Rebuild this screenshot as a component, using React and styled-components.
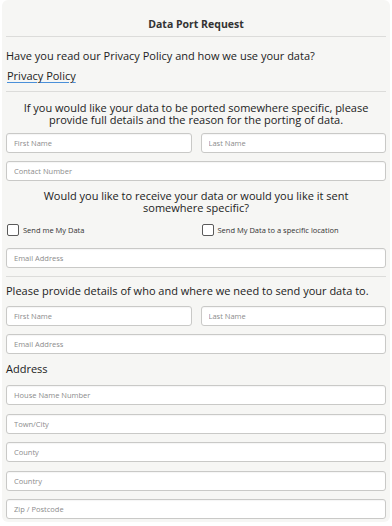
import React from "react";
import styled, { createGlobalStyle } from "styled-components";

const Global = createGlobalStyle`
  html, body { margin: 0; padding: 0; background: #ffffff; }
  body { font-family: "Open Sans", "Noto Sans", sans-serif; color: #222; }
  * { box-sizing: border-box; }
`;

const Card = styled.div`
  margin: 0 2px;
  background: #f6f6f4;
  border-radius: 6px;
  padding: 17px 4px 3px 4px;
  display: flex;
  flex-direction: column;
`;

const Title = styled.h1`
  margin: 0;
  padding: 0 0 5px;
  font-size: 10.5px;
  line-height: 14px;
  font-weight: 700;
  text-align: center;
  color: #333;
  border-bottom: 1px solid #dcdcda;
`;

const Text = styled.p`
  margin: ${(p) => p.$m || "0"};
  padding: 0 ${(p) => p.$inset || "0"};
  font-size: 11px;
  line-height: ${(p) => (p.$center ? "12px" : "14px")};
  text-align: ${(p) => (p.$center ? "center" : "left")};
  color: #222;
`;

const PolicyLink = styled.a`
  display: block;
  align-self: flex-start;
  margin: 6px 0 0 1px;
  font-size: 11px;
  line-height: 14px;
  color: #222;
  text-decoration: underline;
  text-decoration-color: #4a90d9;
  text-decoration-thickness: 1px;
  text-underline-offset: 1.5px;
`;

const Divider = styled.hr`
  margin: ${(p) => p.$m || "0"};
  border: 0;
  border-top: 1px solid #dcdcda;
  height: 0;
`;

const Row = styled.div`
  display: grid;
  grid-template-columns: 1fr 1fr;
  column-gap: 9px;
`;

const Fields = styled.div`
  display: flex;
  flex-direction: column;
  gap: ${(p) => p.$gap || "8px"};
  margin: ${(p) => p.$m || "0"};
`;

const Input = styled.input`
  display: block;
  width: 100%;
  height: 20px;
  margin: 0;
  border: 1px solid #c9c9c7;
  border-radius: 3px;
  background: #ffffff;
  padding: 0 7px;
  font-family: "Open Sans", sans-serif;
  font-size: 7.5px;
  color: #333;
  box-shadow: inset 0 1px 1px rgba(0, 0, 0, 0.04);
  outline: none;
  &::placeholder {
    color: #8c8c8c;
  }
`;

const Checks = styled.div`
  display: grid;
  grid-template-columns: 1fr 1fr;
  column-gap: 9px;
  margin: 10px 0 0;
`;

const CheckLabel = styled.label`
  display: flex;
  align-items: center;
  gap: 4px;
  height: 12px;
  font-size: 7.5px;
  color: #333;
  padding-left: 1px;
`;

const Box = styled.span`
  width: 12px;
  height: 12px;
  border: 1.3px solid #5a5a5a;
  border-radius: 2px;
  background: #fff;
  flex: none;
`;

const SubHead = styled.h2`
  margin: ${(p) => p.$m || "0"};
  font-size: 11px;
  line-height: 14px;
  font-weight: 400;
  color: #222;
`;

export default function App() {
  return (
    <>
      <Global />
      <Card>
        <Title>Data Port Request</Title>
        <Text $m="12px 0 0">Have you read our Privacy Policy and how we use your data?</Text>
        <PolicyLink href="#">Privacy Policy</PolicyLink>
        <Divider $m="8px 0 0" />
        <Text $center $m="10px 0 0">
          If you would like your data to be ported somewhere specific, please provide full
          details and the reason for the porting of data.
        </Text>
        <Fields $m="7px 0 0">
          <Row>
            <Input placeholder="First Name" />
            <Input placeholder="Last Name" />
          </Row>
          <Input placeholder="Contact Number" />
        </Fields>
        <Text $center $inset="30px" $m="9px 0 0">
          Would you like to receive your data or would you like it sent somewhere specific?
        </Text>
        <Checks>
          <CheckLabel>
            <Box />
            Send me My Data
          </CheckLabel>
          <CheckLabel>
            <Box />
            Send My Data to a specific location
          </CheckLabel>
        </Checks>
        <Fields $m="12px 0 0">
          <Input placeholder="Email Address" />
        </Fields>
        <Divider $m="8px 0 0" />
        <SubHead $m="7px 0 0">
          Please provide details of who and where we need to send your data to.
        </SubHead>
        <Fields $m="8px 0 0">
          <Row>
            <Input placeholder="First Name" />
            <Input placeholder="Last Name" />
          </Row>
          <Input placeholder="Email Address" />
        </Fields>
        <SubHead $m="8px 0 0">Address</SubHead>
        <Fields $m="9px 0 0" $gap="8.5px">
          <Input placeholder="House Name Number" />
          <Input placeholder="Town/City" />
          <Input placeholder="County" />
          <Input placeholder="Country" />
          <Input placeholder="Zip / Postcode" />
        </Fields>
      </Card>
    </>
  );
}
